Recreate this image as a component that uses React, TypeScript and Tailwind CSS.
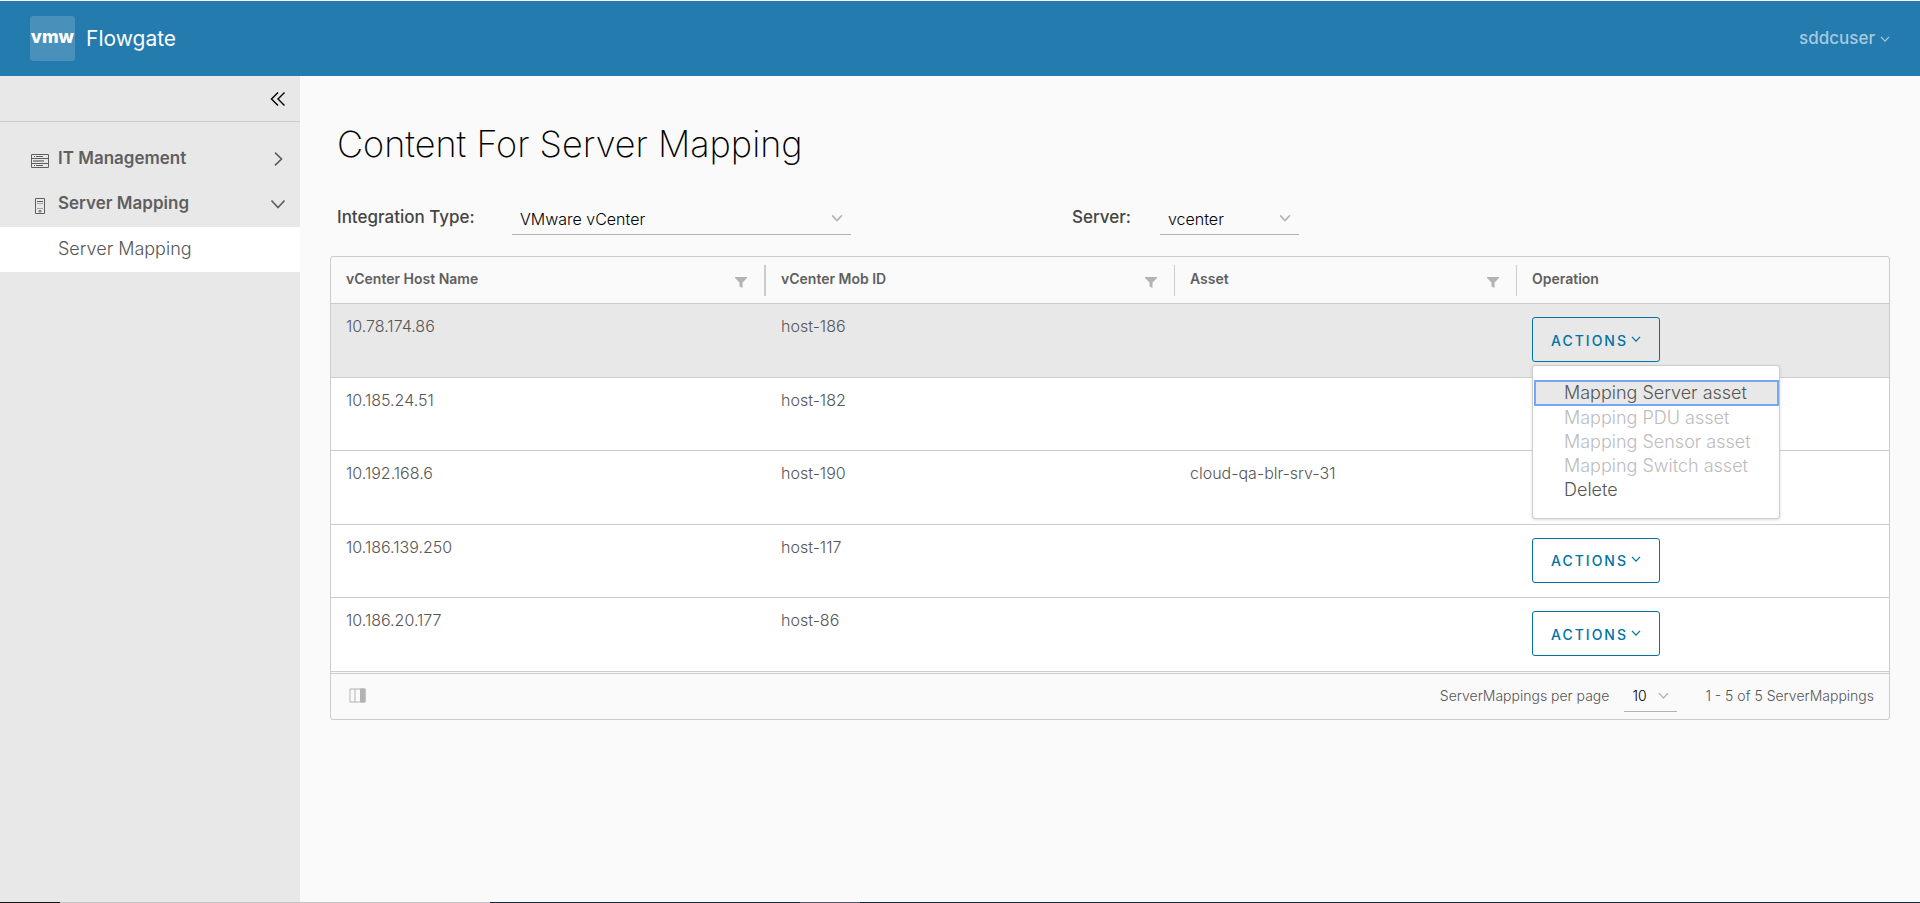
import React, { useState } from "react";

type Mapping = { host: string; mob: string; asset?: string };

const mappings: Mapping[] = [
  { host: "10.78.174.86", mob: "host-186" },
  { host: "10.185.24.51", mob: "host-182" },
  { host: "10.192.168.6", mob: "host-190", asset: "cloud-qa-blr-srv-31" },
  { host: "10.186.139.250", mob: "host-117" },
  { host: "10.186.20.177", mob: "host-86" },
];

const menuItems = [
  { label: "Mapping Server asset", disabled: false },
  { label: "Mapping PDU asset", disabled: true },
  { label: "Mapping Sensor asset", disabled: true },
  { label: "Mapping Switch asset", disabled: true },
  { label: "Delete", disabled: false },
];

function ChevronDown({ className, width = 2 }: { className?: string; width?: number }) {
  return (
    <svg viewBox="0 0 16 16" className={className} fill="none" stroke="currentColor" strokeWidth={width} aria-hidden="true">
      <path d="M1.500 4.500 8 11.500 14.500 4.500" />
    </svg>
  );
}

function FilterIcon() {
  return (
    <svg viewBox="0 0 12 11" className="h-[11px] w-3 fill-[#b3b3b3]" aria-hidden="true">
      <path d="M0 0h12v1L7.500 5.500V11L4.500 9.500v-4L0 1z" />
    </svg>
  );
}

function HeaderCell({ label, filter, divider }: { label: string; filter?: boolean; divider?: string }) {
  return (
    <th scope="col" className="h-[47px] border-b border-[#ccc] p-0 text-left align-middle">
      <div className={"flex h-[31px] items-center justify-between pl-[15px] pr-[17px] " + (divider ?? "")}>
        <span className="pb-[2px] text-sm font-semibold text-[#5f5f5f]">{label}</span>
        {filter && (
          <button type="button" aria-label={"Filter " + label} className="mt-1">
            <FilterIcon />
          </button>
        )}
      </div>
    </th>
  );
}

function ActionsMenu() {
  return (
    <ul role="menu" className="absolute left-0 top-12 z-10 w-[248px] rounded-[3px] border border-[#ccc] bg-white pb-4 pl-px pt-[14px] shadow-[0_1px_3px_rgba(115,115,115,0.25)]">
      {menuItems.map((item, i) => (
        <li key={item.label} role="none">
          <button
            type="button"
            role="menuitem"
            disabled={item.disabled}
            className={
              "block w-full whitespace-nowrap pl-[30px] text-left text-lg " +
              (i === 0
                ? "bg-[#e8e8e8] leading-[26px] text-[#565656] outline-2 -outline-offset-2 outline-[#75a7f5]"
                : item.disabled
                  ? "leading-6 text-[#bcbcbc]"
                  : "leading-6 text-[#565656]")
            }
          >
            {item.label}
          </button>
        </li>
      ))}
    </ul>
  );
}

export default function App() {
  const [openRow, setOpenRow] = useState(0);
  return (
    <div className="flex min-h-screen flex-col bg-[#fafafa] pt-px font-['Inter',sans-serif] font-light text-[#565656]">
      <header className="flex h-[75px] items-center justify-between bg-[#247bae] px-[30px]">
        <a href="#home" className="flex items-center gap-[11px]">
          <span className="flex size-[45px] items-center justify-center rounded-[3px] bg-[#4990bb] pb-[3px] text-lg font-extrabold text-white">vmw</span>
          <span className="text-[21px] font-normal text-[#fafafa]">Flowgate</span>
        </a>
        <button type="button" className="flex items-center gap-[5px] text-[17px] font-medium text-[#a7cae0]">
          sddcuser
          <ChevronDown className="size-[10px]" />
        </button>
      </header>

      <div className="flex flex-1">
        <nav className="w-[300px] shrink-0 bg-[#e8e8e8]">
          <div className="flex h-[46px] items-center justify-end border-b border-[#ccc] pr-[14px]">
            <button type="button" aria-label="Collapse navigation" className="text-black">
              <svg viewBox="0 0 16 16" className="size-4" fill="none" stroke="currentColor" strokeWidth="1.400">
                <path d="M8 1.500 1.500 8 8 14.500M14.500 1.500 8 8l6.500 6.500" />
              </svg>
            </button>
          </div>
          <div className="pt-[15px]">
            <button type="button" className="flex h-[45px] w-full items-center pb-[2px] pl-[30px] pr-[14px] text-[17px] font-semibold text-[#5f5f5f]">
              <svg viewBox="0 0 20 16" className="mr-2 mt-1 h-4 w-5 shrink-0" fill="none" stroke="currentColor" aria-hidden="true">
                <path d="M1.500 1.500h17v13h-17zM1 5.500h18M1 10.500h18" />
                <path d="M4 3.500h1M6 3.500h7M4 12.500h1M6 12.500h7" />
                <path d="M3 8h11" strokeWidth="2" opacity=".6" />
              </svg>
              <span className="flex-1 text-left">IT Management</span>
              <svg viewBox="0 0 16 14" className="h-[14px] w-4" fill="none" stroke="currentColor" strokeWidth="1.700" aria-hidden="true">
                <path d="M5 .7 11.500 7 5 13.300" />
              </svg>
            </button>
            <button type="button" className="flex h-[45px] w-full items-center pb-[2px] pl-[30px] pr-[14px] text-[17px] font-semibold text-[#5f5f5f]">
              <svg viewBox="0 0 20 18" className="mr-2 mt-1 h-[18px] w-5 shrink-0" fill="none" stroke="currentColor" aria-hidden="true">
                <path d="M5.500 1.500h9v15h-9zM7 4.500h6" />
                <path d="M7 6.500h6M7 11.500h6" opacity=".5" />
                <path d="M9 13.500h2v1.500H9z" opacity=".8" />
              </svg>
              <span className="flex-1 text-left">Server Mapping</span>
              <ChevronDown className="size-4" width={1.7} />
            </button>
            <a href="#server-mapping" className="flex h-[45px] items-center bg-white pb-px pl-[58px] text-lg">
              Server Mapping
            </a>
          </div>
        </nav>

        <main className="min-w-0 flex-1 px-[30px] pt-[46px]">
          <h1 className="pl-[7px] text-4xl font-extralight leading-[44px] text-black">Content For Server Mapping</h1>

          <div className="mt-[34px] flex h-9 items-start pl-[7px]">
            <label htmlFor="type" className="w-[175px] pt-[5px] text-[17px] font-medium leading-6 text-[#454545]">Integration Type:</label>
            <div className="relative">
              <select id="type" className="h-[35px] w-[339px] appearance-none border-b border-[#b3b3b3] bg-transparent pl-2 pt-1 text-base text-black">
                <option>VMware vCenter</option>
              </select>
              <ChevronDown width={2} className="pointer-events-none absolute right-2 top-3 size-3 text-[#b3b3b3]" />
            </div>
            <label htmlFor="server" className="ml-[221px] w-[88px] pt-[5px] text-[17px] font-medium leading-6 text-[#454545]">Server:</label>
            <div className="relative">
              <select id="server" className="h-[35px] w-[139px] appearance-none border-b border-[#b3b3b3] bg-transparent pl-2 pt-1 text-base text-black">
                <option>vcenter</option>
              </select>
              <ChevronDown width={2} className="pointer-events-none absolute right-2 top-3 size-3 text-[#b3b3b3]" />
            </div>
          </div>

          <div className="mt-5 rounded-[3px] border border-[#ccc]">
            <table className="h-[415px] w-full table-fixed border-separate border-spacing-0">
              <colgroup>
                <col className="w-[435px]" />
                <col className="w-[409px]" />
                <col className="w-[342px]" />
                <col />
              </colgroup>
              <thead>
                <tr>
                  <HeaderCell label="vCenter Host Name" filter divider="border-r-2 border-[#ccc]" />
                  <HeaderCell label="vCenter Mob ID" filter divider="border-r border-[#ccc]" />
                  <HeaderCell label="Asset" filter divider="border-r border-[#ccc]" />
                  <HeaderCell label="Operation" />
                </tr>
              </thead>
              <tbody>
                {mappings.map((m, i) => (
                  <tr key={m.host} className={i === openRow ? "bg-[#e8e8e8]" : "bg-white"}>
                    {[m.host, m.mob, m.asset ?? ""].map((text, c) => (
                      <td key={c} className="h-[73px] border-b border-[#ccc] px-[15px] pt-[10px] align-top text-base">{text}</td>
                    ))}
                    <td className="h-[73px] border-b border-[#ccc] pl-[15px] pt-[13px] align-top">
                      <div className="relative w-[128px]">
                        <button
                          type="button"
                          onClick={() => setOpenRow(i === openRow ? -1 : i)}
                          className="flex h-[45px] w-full items-center justify-center gap-[3px] rounded-[3px] border border-[#0072a3] pt-[2px] text-sm font-medium tracking-[2px] text-[#0072a3]"
                        >
                          ACTIONS
                          <ChevronDown className="mb-1 size-[10px]" width={2} />
                        </button>
                        {i === openRow && <ActionsMenu />}
                      </div>
                    </td>
                  </tr>
                ))}
              </tbody>
            </table>
            <div className="mt-px flex h-[46px] items-center border-t border-[#ccc] px-[15px] text-sm">
              <button type="button" aria-label="Show columns" className="mb-[3px] ml-[3px] mr-auto">
                <svg viewBox="0 0 17 15" className="h-[15px] w-[17px]" fill="none" stroke="#b3b3b3" aria-hidden="true">
                  <path d="M1 1h15v13H1z" />
                  <path d="M6 1v13" />
                  <path d="M11.500 1H16v13h-4.500z" fill="#b3b3b3" />
                </svg>
              </button>
              <label htmlFor="size" className="pb-px">ServerMappings per page</label>
              <div className="relative ml-[15px]">
                <select id="size" className="h-[31px] w-[53px] appearance-none border-b border-[#b3b3b3] bg-transparent pl-2 text-sm text-black">
                  <option>10</option>
                </select>
                <ChevronDown width={2} className="pointer-events-none absolute right-2 top-[9px] size-[11px] text-[#b3b3b3]" />
              </div>
              <span className="ml-7 pb-px">1 - 5 of 5 ServerMappings</span>
            </div>
          </div>
        </main>
      </div>

      <footer className="flex h-px bg-[#162636]">
        <div className="w-[60px] bg-[#151515]" />
        <div className="w-[430px] bg-[#c3c3c3]" />
        <div className="ml-[310px] w-[60px] bg-[#505666]" />
      </footer>
    </div>
  );
}
